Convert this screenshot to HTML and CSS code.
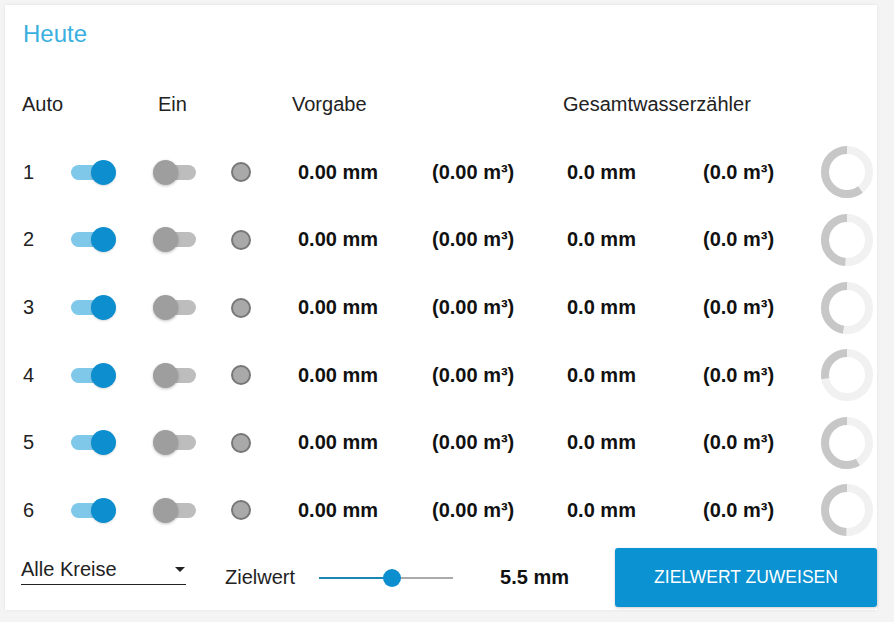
FILE: index.html
```html
<!DOCTYPE html>
<html>
<head>
  <title>Heute</title>
  <link rel="stylesheet" href="styles.css">
</head>
<body>
  <div class="card">
    <h2 class="title">Heute</h2>

    <div class="grid">
      <div class="head span2">Auto</div>
      <div class="head center">Ein</div>
      <div></div>
      <div class="head shift-vorgabe">Vorgabe</div>
      <div></div>
      <div class="head shift-total span2">Gesamtwasserzähler</div>
      <div></div>

      <div class="num">1</div>
      <div><span class="switch on"><span class="knob"></span></span></div>
      <div><span class="switch"><span class="knob"></span></span></div>
      <div><span class="dot"></span></div>
      <div class="val">0.00 mm</div>
      <div class="val">(0.00 m³)</div>
      <div class="val">0.0 mm</div>
      <div class="val">(0.0 m³)</div>
      <div><svg class="donut" viewBox="0 0 52 52"><circle class="ring" cx="26" cy="26" r="22"/><circle class="fill" cx="26" cy="26" r="22" style="stroke-dasharray: 83 139"/></svg></div>

      <div class="num">2</div>
      <div><span class="switch on"><span class="knob"></span></span></div>
      <div><span class="switch"><span class="knob"></span></span></div>
      <div><span class="dot"></span></div>
      <div class="val">0.00 mm</div>
      <div class="val">(0.00 m³)</div>
      <div class="val">0.0 mm</div>
      <div class="val">(0.0 m³)</div>
      <div><svg class="donut" viewBox="0 0 52 52"><circle class="ring" cx="26" cy="26" r="22"/><circle class="fill" cx="26" cy="26" r="22" style="stroke-dasharray: 67 139"/></svg></div>

      <div class="num">3</div>
      <div><span class="switch on"><span class="knob"></span></span></div>
      <div><span class="switch"><span class="knob"></span></span></div>
      <div><span class="dot"></span></div>
      <div class="val">0.00 mm</div>
      <div class="val">(0.00 m³)</div>
      <div class="val">0.0 mm</div>
      <div class="val">(0.0 m³)</div>
      <div><svg class="donut" viewBox="0 0 52 52"><circle class="ring" cx="26" cy="26" r="22"/><circle class="fill" cx="26" cy="26" r="22" style="stroke-dasharray: 65 139"/></svg></div>

      <div class="num">4</div>
      <div><span class="switch on"><span class="knob"></span></span></div>
      <div><span class="switch"><span class="knob"></span></span></div>
      <div><span class="dot"></span></div>
      <div class="val">0.00 mm</div>
      <div class="val">(0.00 m³)</div>
      <div class="val">0.0 mm</div>
      <div class="val">(0.0 m³)</div>
      <div><svg class="donut" viewBox="0 0 52 52"><circle class="ring" cx="26" cy="26" r="22"/><circle class="fill" cx="26" cy="26" r="22" style="stroke-dasharray: 38 139"/></svg></div>

      <div class="num">5</div>
      <div><span class="switch on"><span class="knob"></span></span></div>
      <div><span class="switch"><span class="knob"></span></span></div>
      <div><span class="dot"></span></div>
      <div class="val">0.00 mm</div>
      <div class="val">(0.00 m³)</div>
      <div class="val">0.0 mm</div>
      <div class="val">(0.0 m³)</div>
      <div><svg class="donut" viewBox="0 0 52 52"><circle class="ring" cx="26" cy="26" r="22"/><circle class="fill" cx="26" cy="26" r="22" style="stroke-dasharray: 80 139"/></svg></div>

      <div class="num">6</div>
      <div><span class="switch on"><span class="knob"></span></span></div>
      <div><span class="switch"><span class="knob"></span></span></div>
      <div><span class="dot"></span></div>
      <div class="val">0.00 mm</div>
      <div class="val">(0.00 m³)</div>
      <div class="val">0.0 mm</div>
      <div class="val">(0.0 m³)</div>
      <div><svg class="donut" viewBox="0 0 52 52"><circle class="ring" cx="26" cy="26" r="22"/><circle class="fill" cx="26" cy="26" r="22" style="stroke-dasharray: 68 139"/></svg></div>
    </div>

    <div class="controls">
      <div class="select">
        <span>Alle Kreise</span>
        <span class="caret"></span>
      </div>
      <span class="label">Zielwert</span>
      <div class="slider">
        <span class="track-on" style="width: 73px"></span>
        <span class="thumb"></span>
        <span class="track-off"></span>
      </div>
      <span class="val target">5.5 mm</span>
      <button class="assign">ZIELWERT ZUWEISEN</button>
    </div>
  </div>
</body>
</html>
```

FILE: styles.css
```css
body { margin: 0; background: #f4f4f4; font-family: "Liberation Sans", Arial, sans-serif; color: #222; }
.card { width: 855px; margin: 5px; padding: 0 0 3px 17px; background: #fff; box-shadow: 0 0 3px rgba(0,0,0,0.08); }
.title { margin: 0; padding: 15px 0 0 1px; height: 51px; line-height: 28px; font-size: 24px; font-weight: normal; color: #3ab0e0; }

.grid { display: grid; grid-template-columns: 48px 82px 78px 68px 134px 135px 136px 118px 56px; grid-auto-rows: 67.6px; align-items: center; }
.head { font-size: 20px; }
.span2 { grid-column: span 2; }
.center { padding-left: 6px; }
.shift-vorgabe { margin-left: -6px; }
.shift-total { margin-left: -4px; }
.num { font-size: 20px; padding-left: 1px; }
.val { font-size: 20px; font-weight: bold; color: #111; white-space: nowrap; }

.switch { position: relative; display: block; width: 42px; height: 15px; margin-left: 2px; border-radius: 8px; background: #bdbdbd; }
.switch .knob { position: absolute; left: -1px; top: -5px; width: 25px; height: 25px; border-radius: 50%; background: #9e9e9e; box-shadow: 0 1px 3px rgba(0,0,0,0.25); }
.switch.on { margin-left: 1px; background: #7fc8ea; }
.switch.on .knob { left: auto; right: -3px; background: #0c8ecf; box-shadow: 0 1px 2px rgba(0,0,0,0.15); }

.dot { display: block; width: 16px; height: 16px; margin-left: 1px; border-radius: 50%; background: #a9a9a9; border: 2px solid #777; }

.donut { display: block; width: 52px; height: 52px; transform: scaleX(-1) rotate(-90deg); }
.donut circle { fill: none; stroke-width: 8; }
.donut .ring { stroke: #f1f1f1; }
.donut .fill { stroke: #c7c7c7; }

.controls { display: flex; align-items: center; height: 59px; margin-top: 4px; }
.select { display: flex; justify-content: space-between; align-items: center; width: 165px; height: 29px; margin-left: -1px; margin-bottom: 16px; border-bottom: 1px solid #222; font-size: 20px; }
.caret { width: 0; height: 0; margin-right: 1px; border-left: 5px solid transparent; border-right: 5px solid transparent; border-top: 5px solid #222; }
.label { margin-left: 39px; font-size: 20px; }
.slider { display: flex; align-items: center; width: 134px; margin-left: 24px; }
.track-on { height: 2px; background: #1a86b6; }
.track-off { flex: 1; height: 2px; background: #aaa; }
.thumb { width: 18px; height: 18px; margin: 0 -9px; border-radius: 50%; background: #0c8ecf; position: relative; }
.target { margin-left: 47px; }
.assign { margin-left: auto; width: 262px; height: 59px; border: none; border-radius: 3px; background: #0a92d2; color: #fff; font-family: "Liberation Sans", Arial, sans-serif; font-size: 17.5px; box-shadow: 0 1px 3px rgba(0,0,0,0.2); }
```
